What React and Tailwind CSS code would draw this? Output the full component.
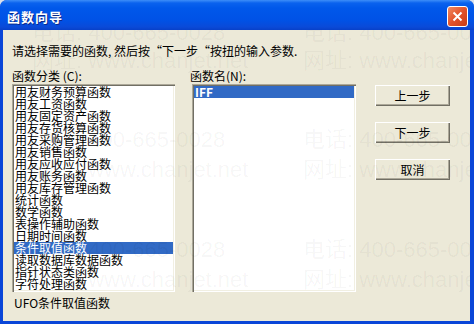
import React from 'react';

const categories = [
    '用友财务预算函数',
    '用友工资函数',
    '用友固定资产函数',
    '用友存货核算函数',
    '用友采购管理函数',
    '用友销售函数',
    '用友应收应付函数',
    '用友账务函数',
    '用友库存管理函数',
    '统计函数',
    '数学函数',
    '表操作辅助函数',
    '日期时间函数',
    '条件取值函数',
    '读取数据库数据函数',
    '指针状态类函数',
    '字符处理函数',
];

const watermark = [
    { top: -8, text: '电话: 400-665-0028' },
    { top: 20, text: '网址: www.chanjet.net' },
    { top: 99, text: '电话: 400-665-0028' },
    { top: 129, text: '网址: www.chanjet.net' },
    { top: 209, text: '电话: 400-665-0028' },
    { top: 239, text: '网址: www.chanjet.net' },
];

function ListBox({ items, selected, className = '' }) {
    return (
        <div className={`h-[208px] bg-white p-[2px] shadow-[inset_1px_1px_#aca899,inset_2px_2px_#716f64,inset_-1px_-1px_#ffffff,inset_-2px_-2px_#f1efe2] ${className}`}>
            {items.map((item, i) => (
                <div
                    key={item}
                    className={`h-[12px] pl-[1px] text-[12px] leading-[12px] whitespace-nowrap ${i === selected ? 'bg-[#316ac5] text-white' : 'text-black'}`}
                >
                    {item}
                </div>
            ))}
        </div>
    );
}

function Button({ children }) {
    return (
        <button className="w-[75px] h-[21px] bg-[#ece9d8] text-[12px] leading-[12px] text-black shadow-[inset_1px_1px_#ffffff,inset_-1px_-1px_#716f64,inset_-2px_-2px_#aca899]">
            {children}
        </button>
    );
}

export default function App() {
    return (
        <div className="w-[474px] h-[324px] bg-[#d8e0ec] font-['Noto_Sans_CJK_SC','Noto_Sans',sans-serif]">
            <div className="flex h-full flex-col overflow-hidden rounded-t-[7px] bg-[#0a46d8]">
                {/* title bar */}
                <div className="h-[30px] flex items-center justify-between pl-[7px] pr-[6px] pt-[3px] bg-[linear-gradient(to_bottom,#3d8ef8_0px,#0a62ee_3px,#0058ea_8px,#0052e6_20px,#0a4ad8_27px,#0840c8_30px)]">
                    <span className="text-[13px] font-bold tracking-[1px] text-white [text-shadow:1px_1px_#0a2a8c]">函数向导</span>
                    <div className="w-[21px] h-[21px] flex items-center justify-center rounded-[3px] border border-white bg-[linear-gradient(135deg,#f08a62,#e2522a_50%,#c83c14)]">
                        <svg width="11" height="11" viewBox="0 0 11 11">
                            <path d="M1.5 1.5 L9.5 9.5 M9.5 1.5 L1.5 9.5" stroke="white" strokeWidth="2" />
                        </svg>
                    </div>
                </div>

                {/* body */}
                <div className="relative flex-1 ml-[3px] mr-[4px] mb-[3px] overflow-hidden bg-[#ece9d8] pl-[9px] pt-[15px] text-[12px] leading-[12px] text-black">
                    <div className="h-[12px] whitespace-nowrap">请选择需要的函数, 然后按“下一步“按扭的输入参数.</div>

                    <div className="mt-[13px] flex">
                        <div className="w-[163px]">
                            <div className="h-[12px] mb-[2px] whitespace-nowrap">函数分类 (C):</div>
                            <ListBox items={categories} selected={13} />
                        </div>
                        <div className="w-[164px] ml-[17px]">
                            <div className="h-[12px] mb-[2px] -ml-[2px] whitespace-nowrap">函数名(N):</div>
                            <ListBox items={['IFF']} selected={0} className="font-bold" />
                        </div>
                        <div className="ml-[19px] mt-[15px] flex flex-col gap-[16px]">
                            <Button>上一步</Button>
                            <Button>下一步</Button>
                            <Button>取消</Button>
                        </div>
                    </div>

                    <div className="mt-[5px] ml-[2px] h-[12px] whitespace-nowrap">UFO条件取值函数</div>

                    {/* watermark */}
                    <div className="pointer-events-none absolute inset-0 font-['Liberation_Sans','Noto_Sans_CJK_SC',sans-serif] text-[22px] leading-[22px] text-black/[0.045]">
                        {watermark.map((w, i) => (
                            <div key={i} className="absolute flex gap-[71px] whitespace-nowrap left-[29px]" style={{ top: w.top }}>
                                <span className="w-[200px]">{w.text}</span>
                                <span>{w.text}</span>
                            </div>
                        ))}
                    </div>
                </div>
            </div>
        </div>
    );
}
